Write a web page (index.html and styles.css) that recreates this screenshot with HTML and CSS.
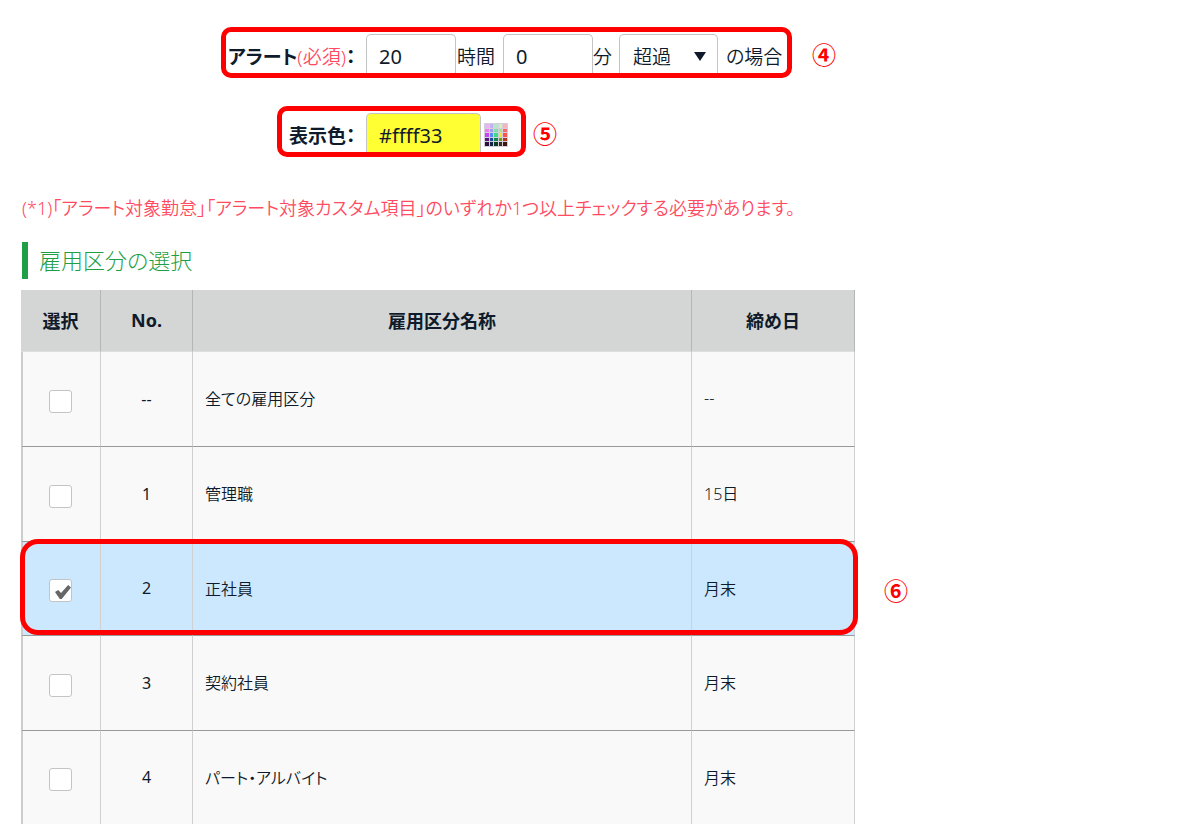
FILE: index.html
```html
<!DOCTYPE html>
<html lang="ja">
<head>
  <meta charset="UTF-8">
  <meta name="viewport" content="width=device-width, initial-scale=1.0">
  <title>アラート設定</title>
  <link rel="stylesheet" href="styles.css">
</head>
<body>
  <form>
    <div class="form-row row-alert">
      <div class="frame">
        <label class="form-label" for="hours">アラート<span class="required">(必須)</span>：</label>
        <input class="field time" type="text" id="hours" value="20">
        <label class="unit-hour" for="hours">時間</label>
        <input class="field time" type="text" id="minutes" value="0">
        <label class="unit-minute" for="minutes">分</label>
        <select class="field condition" id="condition" aria-label="条件">
          <option selected>超過</option>
          <option>未満</option>
        </select>
        <label class="unit-case" for="condition">の場合</label>
      </div>
      <span class="marker">④</span>
    </div>

    <div class="form-row row-color">
      <div class="frame">
        <label class="form-label" for="color">表示色：</label>
        <input class="field color" type="text" id="color" value="#ffff33">
        <button class="palette" type="button" aria-label="色を選択">
          <svg viewBox="0 0 24 24" width="24" height="24">
            <rect width="24" height="24" fill="#d3cfdc"/>
            <rect x="1" y="1" width="4" height="4" fill="#e9b5f0"/>
            <rect x="6" y="1" width="3" height="4" fill="#c4b0f2"/>
            <rect x="10" y="1" width="4" height="4" fill="#b5e8c8"/>
            <rect x="15" y="1" width="3" height="4" fill="#d9efb0"/>
            <rect x="19" y="1" width="4" height="4" fill="#f5b5c0"/>
            <rect x="1" y="6" width="4" height="3" fill="#f07af0"/>
            <rect x="6" y="6" width="3" height="3" fill="#a39bf0"/>
            <rect x="10" y="6" width="4" height="3" fill="#7fe0a8"/>
            <rect x="15" y="6" width="3" height="3" fill="#a8ea80"/>
            <rect x="19" y="6" width="4" height="3" fill="#fa6a6a"/>
            <rect x="1" y="10" width="4" height="4" fill="#c545f5"/>
            <rect x="6" y="10" width="3" height="4" fill="#5a8cf5"/>
            <rect x="10" y="10" width="4" height="4" fill="#3cdc8c"/>
            <rect x="15" y="10" width="3" height="4" fill="#f5e620"/>
            <rect x="19" y="10" width="4" height="4" fill="#fa5555"/>
            <rect x="1" y="15" width="4" height="3" fill="#5c1580"/>
            <rect x="6" y="15" width="3" height="3" fill="#1b4a96"/>
            <rect x="10" y="15" width="4" height="3" fill="#0f8a4a"/>
            <rect x="15" y="15" width="3" height="3" fill="#7c9a10"/>
            <rect x="19" y="15" width="4" height="3" fill="#b03c20"/>
            <rect x="1" y="19" width="4" height="4" fill="#2c1038"/>
            <rect x="6" y="19" width="3" height="4" fill="#102448"/>
            <rect x="10" y="19" width="4" height="4" fill="#0c3c24"/>
            <rect x="15" y="19" width="3" height="4" fill="#38300c"/>
            <rect x="19" y="19" width="4" height="4" fill="#401410"/>
          </svg>
        </button>
      </div>
      <span class="marker">⑤</span>
    </div>

    <p class="note">(*1)「アラート対象勤怠」「アラート対象カスタム項目」のいずれか1つ以上チェックする必要があります。</p>

    <h2>雇用区分の選択</h2>

    <table>
      <thead>
        <tr>
          <th class="col-check">選択</th>
          <th class="col-no">No.</th>
          <th>雇用区分名称</th>
          <th class="col-day">締め日</th>
        </tr>
      </thead>
      <tbody>
        <tr>
          <td class="check"><input type="checkbox" aria-label="全ての雇用区分"></td>
          <td class="number">--</td>
          <td>全ての雇用区分</td>
          <td>--</td>
        </tr>
        <tr>
          <td class="check"><input type="checkbox" aria-label="管理職"></td>
          <td class="number">1</td>
          <td>管理職</td>
          <td>15日</td>
        </tr>
        <tr class="selected">
          <td class="check"><input type="checkbox" aria-label="正社員" checked></td>
          <td class="number">2</td>
          <td>正社員</td>
          <td>月末<span class="row-frame"></span><span class="marker row-marker">⑥</span></td>
        </tr>
        <tr>
          <td class="check"><input type="checkbox" aria-label="契約社員"></td>
          <td class="number">3</td>
          <td>契約社員</td>
          <td>月末</td>
        </tr>
        <tr>
          <td class="check"><input type="checkbox" aria-label="パート・アルバイト"></td>
          <td class="number">4</td>
          <td>パート・アルバイト</td>
          <td>月末</td>
        </tr>
      </tbody>
    </table>
  </form>
</body>
</html>
```
FILE: styles.css
```css
* {
  box-sizing: border-box;
}
body {
  margin: 0;
  padding: 27px 21px 0;
  background: #fff;
  color: #0f1a2a;
  font-family: "Noto Sans", "Noto Sans CJK JP", sans-serif;
  font-size: 16px;
  font-weight: 350;
  font-feature-settings: "palt";
}
input, select, button {
  font: inherit;
  color: inherit;
  font-feature-settings: inherit;
}

/* フォーム */
.form-row {
  display: flex;
  align-items: center;
  font-size: 19px;
  white-space: nowrap;
}
.row-alert {
  gap: 20px;
  margin-left: 200px;
}
.row-color {
  gap: 7px;
  margin: 28px 0 0 256px;
}
.frame {
  display: flex;
  align-items: center;
  height: 51px;
  padding-top: 2px;
  border: 5px solid #f00;
  border-radius: 10px;
}
.row-alert .frame {
  width: 571px;
}
.row-color .frame {
  width: 249px;
}
.frame label {
  padding-top: 4px;
}
.frame .form-label {
  width: 140px;
  padding-left: 2px;
  font-weight: bold;
}
.row-color .form-label {
  width: 84px;
  padding-left: 7px;
}
.required {
  color: #ff4a60;
  font-weight: 350;
}
.field {
  height: 39px;
  margin: 0;
  padding: 5px 12px 0;
  border: 1px solid #c4c4c4;
  border-bottom: 0;
  border-radius: 5px 5px 0 0;
  background: #fff;
  outline: none;
}
.time {
  width: 90px;
  font-size: 20px;
  font-weight: 400;
}
.color {
  width: 115px;
  background: #ffff33;
  font-size: 20px;
  font-weight: 400;
}
.frame .unit-hour {
  width: 47px;
  padding-left: 1px;
}
.unit-minute {
  width: 26px;
}
.unit-case {
  padding-left: 8px;
}
.condition {
  width: 99px;
  padding: 6px 13px 0;
  appearance: none;
  background: #fff url("data:image/svg+xml,%3Csvg xmlns='http://www.w3.org/2000/svg' width='12' height='9'%3E%3Cpath d='M0 0h12L6 9z' fill='%230f1a2a'/%3E%3C/svg%3E") no-repeat right 11px top 17px;
}
.palette {
  width: 24px;
  height: 24px;
  margin: 4px 0 0 3px;
  padding: 0;
  border: 0;
  background: none;
  cursor: pointer;
}
.palette svg {
  display: block;
}
.marker {
  padding-top: 3px;
  color: #f00;
  font-family: "Noto Sans CJK JP", sans-serif;
  font-size: 24px;
  font-weight: bold;
  line-height: 24px;
}

.note {
  margin: 36px 0 19px 1px;
  color: #ff4a60;
  font-size: 18px;
  line-height: 30px;
}
h2 {
  margin: 0 0 11px 1px;
  padding-left: 11px;
  border-left: 6px solid #1e9e45;
  color: #1e9e45;
  font-size: 22px;
  font-weight: 300;
  line-height: 37px;
}

/* 雇用区分の一覧 */
table {
  width: 100%;
  max-width: 834px;
  table-layout: fixed;
  border-spacing: 0;
}
th {
  height: 62px;
  padding: 0 0 2px;
  border-right: 1px solid #b4b6b6;
  border-bottom: 1px solid #dedede;
  background: #d4d6d5;
  font-size: 18px;
}
.col-check {
  width: 80px;
}
.col-no {
  width: 92px;
}
.col-day {
  width: 163px;
}
td {
  height: 95px;
  padding: 0 11px 2px 12px;
  border-right: 1px solid #d0d0d0;
  border-bottom: 1px solid #999;
  background: #f9f9f9;
}
td:first-child {
  border-left: 2px solid #ccc;
}
tr:last-child td {
  height: 93px;
  border-bottom: 0;
}
.check {
  padding: 0 2px 0 0;
}
.number {
  padding: 0 0 1px;
  font-weight: 400;
  text-align: center;
}
.selected {
  position: relative;
}
.selected td {
  height: 94px;
  background: #cce8ff;
}
input[type="checkbox"] {
  display: block;
  width: 23px;
  height: 23px;
  margin: 4px auto 0;
  appearance: none;
  border: 1px solid #c4c4c4;
  border-radius: 3px;
  background: #fff;
}
input[type="checkbox"]:checked::before {
  content: "";
  display: block;
  width: 16px;
  height: 14px;
  margin: 5px 0 0 5px;
  background: #666;
  clip-path: polygon(0 50%, 20% 36%, 38% 58%, 82% 0, 100% 18%, 42% 100%, 30% 100%);
}
.row-frame {
  position: absolute;
  inset: -3px -3px 1px -1px;
  border: 5px solid #f00;
  border-radius: 18px;
}
.row-marker {
  position: absolute;
  top: 33px;
  right: -53px;
}
```
